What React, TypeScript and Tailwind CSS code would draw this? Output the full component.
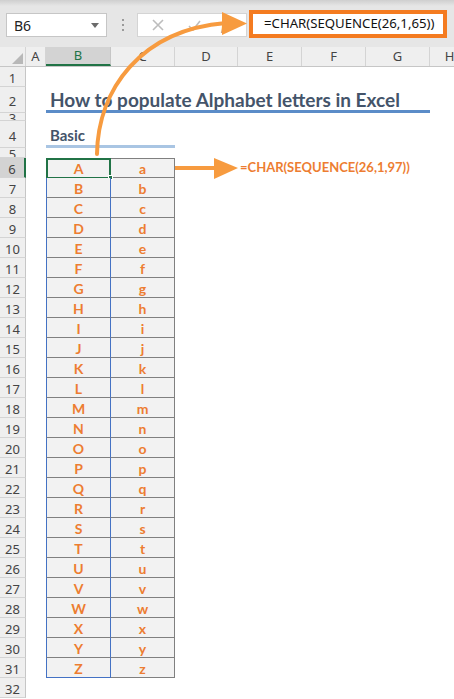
import React from "react";

const UI = { fontFamily: '"Noto Sans", "Open Sans", sans-serif' };
const CELL = { fontFamily: 'Lato, "Noto Sans", sans-serif' };

const cols = [
  { k: "A", cls: "w-[20px]" },
  { k: "B", cls: "w-[65px]" },
  { k: "C", cls: "w-[64px]" },
  { k: "D", cls: "w-[63px]" },
  { k: "E", cls: "w-[64px]" },
  { k: "F", cls: "w-[64px]" },
  { k: "G", cls: "w-[64px]" },
  { k: "H", cls: "w-[40px]" },
];

function RowHead({ n, h, sel }: { n: number; h: string; sel?: boolean }) {
  return (
    <div
      className={
        "w-[26px] shrink-0 flex items-center justify-center overflow-hidden border-b border-[#d4d4d4] text-[13px] leading-[16px] pt-[3px] text-[#444] " +
        h +
        (sel
          ? " bg-[#d3d3d3] border-r-2 border-r-[#217346]"
          : " bg-[#efefef] border-r border-r-[#c6c6c6]")
      }
      style={UI}
    >
      {n}
    </div>
  );
}

export default function App() {
  const upper = "ABCDEFGHIJKLMNOPQRSTUVWXYZ".split("");
  return (
    <div className="relative w-[454px] h-[699px] overflow-hidden bg-white">
      {/* Top bar */}
      <div className="h-[47px] flex items-start bg-[linear-gradient(#cfcfcf,#e6e6e6_6px)]">
        <div
          className="ml-[6px] mt-[13px] w-[101px] h-[24px] bg-white border border-[#c6c6c6] flex items-center justify-between pl-[7px] pr-[7px] text-[14px] text-[#222]"
          style={UI}
        >
          <span>B6</span>
          <svg width="8" height="5" viewBox="0 0 8 5">
            <polygon points="0,0 8,0 4,5" fill="#6b6b6b" />
          </svg>
        </div>
        <div className="ml-[15px] mt-[19px] flex flex-col gap-[3px]">
          <div className="w-[2px] h-[2px] bg-[#9a9a9a]" />
          <div className="w-[2px] h-[2px] bg-[#9a9a9a]" />
          <div className="w-[2px] h-[2px] bg-[#9a9a9a]" />
        </div>
        <div className="ml-[13px] mt-[13px] w-[110px] h-[24px] bg-white border border-[#d4d4d4] flex items-center">
          <svg className="ml-[14px]" width="12" height="12" viewBox="0 0 12 12">
            <path d="M1 1 L11 11 M11 1 L1 11" stroke="#bdbdbd" strokeWidth="1.6" />
          </svg>
          <svg className="ml-[24px]" width="13" height="11" viewBox="0 0 13 11">
            <path d="M1 6 L5 10 L12 1" stroke="#bdbdbd" strokeWidth="1.6" fill="none" />
          </svg>
          <span className="ml-[20px] text-[14px] italic text-[#888]" style={{ fontFamily: '"Liberation Serif", serif' }}>
            fx
          </span>
        </div>
        <div
          className="ml-[2px] mt-[10px] w-[198px] h-[28px] bg-white border-[4px] border-[#f47b20] flex items-center pl-[11px] text-[13.2px] text-[#111]"
          style={UI}
        >
          =CHAR(SEQUENCE(26,1,65))
        </div>
      </div>

      {/* Column headers */}
      <div className="flex h-[20px] bg-[#efefef] border-b border-[#c6c6c6]" style={UI}>
        <div className="w-[26px] shrink-0 relative border-r border-[#d4d4d4]">
          <svg className="absolute right-[2px] bottom-[2px]" width="11" height="11" viewBox="0 0 11 11">
            <polygon points="11,0 11,11 0,11" fill="#b8b8b8" />
          </svg>
        </div>
        {cols.map((c) => (
          <div
            key={c.k}
            className={
              c.cls +
              " shrink-0 flex items-center justify-center text-[13px] " +
              (c.k === "B"
                ? "bg-[#d3d3d3] text-[#217346] border-b-2 border-[#217346] border-r border-r-[#c6c6c6]"
                : "text-[#444] border-r border-[#d4d4d4]")
            }
          >
            {c.k}
          </div>
        ))}
      </div>

      {/* Row 1 */}
      <div className="flex">
        <RowHead n={1} h="h-[20px]" />
      </div>
      {/* Row 2 title */}
      <div className="flex">
        <RowHead n={2} h="h-[26px]" />
        <div className="w-[20px]" />
        <div
          className="w-[384px] h-[26px] border-b-[3px] border-[#5b8cc8] flex items-end pl-[4px] whitespace-nowrap text-[19px] leading-[20px] font-bold text-[#44546a]"
          style={CELL}
        >
          How to populate Alphabet letters in Excel
        </div>
      </div>
      {/* Row 3 */}
      <div className="flex">
        <RowHead n={3} h="h-[8px]" />
      </div>
      {/* Row 4 */}
      <div className="flex">
        <RowHead n={4} h="h-[27px]" />
        <div className="w-[20px]" />
        <div
          className="w-[129px] h-[27px] border-b-[3px] border-[#a9c5e3] flex items-end pl-[4px] pb-[1px] text-[15px] leading-[17px] font-bold text-[#44546a]"
          style={CELL}
        >
          Basic
        </div>
      </div>
      {/* Row 5 */}
      <div className="flex">
        <RowHead n={5} h="h-[10px]" />
      </div>

      {/* Table rows 6..31 */}
      {upper.map((L, i) => {
        const n = i + 6;
        const first = i === 0;
        const last = i === 25;
        return (
          <div key={L} className="flex">
            <RowHead n={n} h="h-[20px]" sel={first} />
            <div className="w-[20px] shrink-0" />
            <div
              className={
                "relative w-[65px] h-[20px] shrink-0 bg-[#f2f2f2] border-l border-r border-[#4472c4] flex items-center justify-center pt-[1px] text-[14px] font-bold text-[#ed7d31] " +
                (first ? "border-t border-t-[#808080] " : "") +
                (last ? "border-b border-b-[#4472c4]" : "border-b border-b-[#808080]")
              }
              style={CELL}
            >
              {L}
              {first && (
                <>
                  <div className="absolute left-[-1px] top-[-1px] w-[65px] h-[21px] border-2 border-[#217346]" />
                  <div className="absolute right-[-3px] bottom-[-3px] w-[5px] h-[5px] bg-[#217346] border border-white" />
                </>
              )}
            </div>
            <div
              className={
                "w-[64px] h-[20px] shrink-0 bg-[#f2f2f2] border-r border-b border-[#808080] flex items-center justify-center pt-[1px] text-[14px] font-bold text-[#ed7d31] " +
                (first ? "border-t" : "")
              }
              style={CELL}
            >
              {L.toLowerCase()}
            </div>
            {first && (
              <div className="ml-[65px] h-[20px] flex items-center whitespace-nowrap text-[13px] font-bold text-[#ed7d31]" style={CELL}>
                =CHAR(SEQUENCE(26,1,97))
              </div>
            )}
          </div>
        );
      })}
      {/* Row 32 */}
      <div className="flex">
        <RowHead n={32} h="h-[20px]" />
      </div>

      {/* Arrows overlay */}
      <svg className="absolute left-0 top-0 pointer-events-none" width="454" height="699" viewBox="0 0 454 699">
        <path d="M97 154 C98 90, 140 30, 226 23" stroke="#f79b3f" strokeWidth="4" fill="none" strokeLinecap="round" />
        <polygon points="222,12 247,23.5 222,35" fill="#f79b3f" />
        <path d="M175 168 L216 168" stroke="#f79b3f" strokeWidth="4" />
        <polygon points="214,158 238,168 214,179" fill="#f79b3f" />
      </svg>
    </div>
  );
}
